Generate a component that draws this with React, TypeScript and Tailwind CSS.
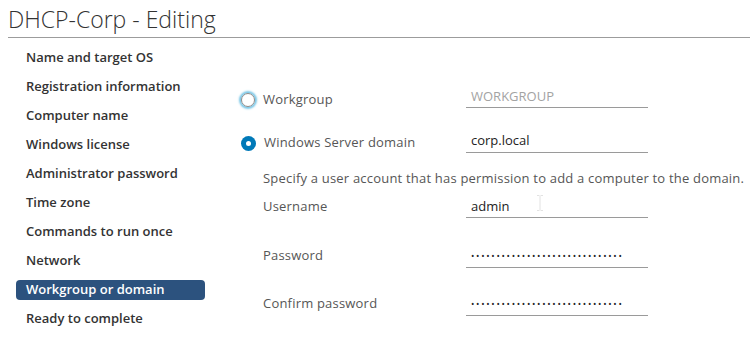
import React from 'react';

const steps = [
    'Name and target OS',
    'Registration information',
    'Computer name',
    'Windows license',
    'Administrator password',
    'Time zone',
    'Commands to run once',
    'Network',
    'Workgroup or domain',
    'Ready to complete',
];

const dots = '••••••••••••••••••••••••••••••';

const Field = ({ value, muted, className }: { value: string; muted?: boolean; className: string }) => (
    <div
        className={`w-[182px] border-b border-[#9a9a9a] pl-[5px] flex items-center text-[13px] tracking-normal ${className} ${
            muted ? 'text-[#a3a3a3]' : 'text-[#222]'
        }`}
    >
        {value}
    </div>
);

const Dots = () => (
    <div className="w-[182px] h-[24px] border-b border-[#9a9a9a] pl-[5px] flex items-center text-[9px] tracking-[1.7px] text-[#222]">
        {dots}
    </div>
);

const App: React.FC = () => {
    return (
        <div className="relative w-[750px] h-[338px] bg-white overflow-hidden font-['Open_Sans',sans-serif]">
            <h1 className="pl-2 pt-[5px] text-[23px] font-light leading-[28px] text-[#333]">DHCP-Corp - Editing</h1>
            <div className="ml-2 mt-[4px] border-t border-[#9c9c9c]" />

            <div className="flex">
                <ul className="w-[240px] pl-4 pt-[5px]">
                    {steps.map((s) => {
                        const active = s === 'Workgroup or domain';
                        return (
                            <li key={s} className="h-[29px] flex items-center">
                                <span
                                    className={`w-[189px] h-[20px] flex items-center pl-[10px] rounded-[4px] text-[13px] font-semibold ${
                                        active ? 'bg-[#2c527e] text-white font-bold' : 'text-[#333]'
                                    }`}
                                >
                                    {s}
                                </span>
                            </li>
                        );
                    })}
                </ul>

                <div className="pt-[50px] text-[13px] text-[#565656] tracking-[0.2px]">
                    <div className="flex items-center h-[24px]">
                        <div className="w-[226px] flex items-center">
                            <span className="ml-[1px] w-[14px] h-[14px] rounded-full border border-[#8a8a8a] shadow-[0_0_2px_2px_#79c6e6]" />
                            <span className="ml-[8px]">Workgroup</span>
                        </div>
                        <Field value="WORKGROUP" muted className="h-[22px] -mt-[6px]" />
                    </div>

                    <div className="flex items-center h-[24px] mt-[19px]">
                        <div className="w-[226px] flex items-center">
                            <span className="ml-[1px] w-[15px] h-[15px] rounded-full bg-[#0079b8] flex items-center justify-center">
                                <span className="w-[5px] h-[5px] rounded-full bg-white" />
                            </span>
                            <span className="ml-[8px]">Windows Server domain</span>
                        </div>
                        <Field value="corp.local" className="h-[24px] -mt-[4px]" />
                    </div>

                    <p className="mt-[14px] ml-[23px] leading-[18px] whitespace-nowrap">
                        Specify a user account that has permission to add a computer to the domain.
                    </p>

                    <div className="flex items-center h-[24px] mt-[8px]">
                        <div className="w-[226px] pl-[23px]">Username</div>
                        <Field value="admin" className="h-[22px]" />
                    </div>

                    <div className="flex items-center h-[24px] mt-[25px]">
                        <div className="w-[226px] pl-[23px]">Password</div>
                        <Dots />
                    </div>

                    <div className="flex items-center h-[24px] mt-[24px]">
                        <div className="w-[226px] pl-[23px]">Confirm password</div>
                        <Dots />
                    </div>
                </div>
            </div>

            <svg className="absolute left-[536px] top-[195px]" width="8" height="16" viewBox="0 0 8 16">
                <path d="M1 0.5h2.5M4.5 0.5H7M4 1v14M1 15.5h2.5M4.5 15.5H7" stroke="#e2e2e2" strokeWidth="1" fill="none" />
            </svg>
        </div>
    );
};

export default App;
